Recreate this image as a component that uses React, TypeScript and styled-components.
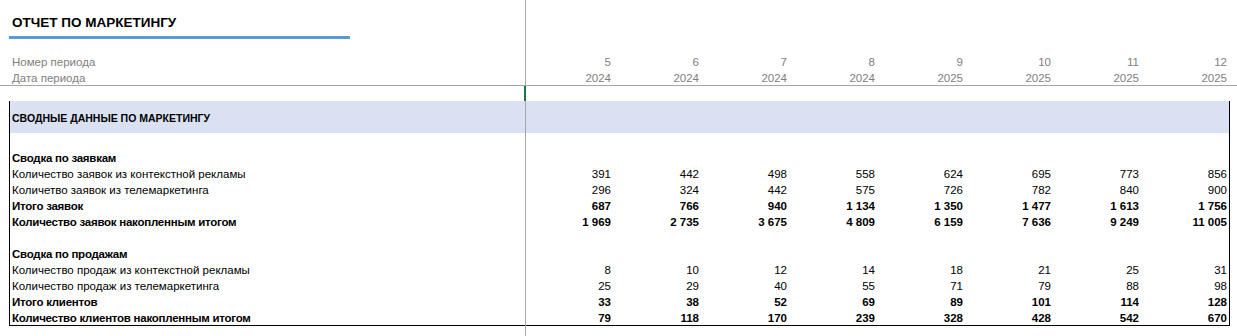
import React from "react";
import styled, { createGlobalStyle } from "styled-components";

const GlobalStyle = createGlobalStyle`
  html, body {
    margin: 0;
    padding: 0;
    background: #ffffff;
  }
  body {
    font-family: "Liberation Sans", Arial, sans-serif;
    font-size: 11.5px;
    color: #000000;
  }
`;

const Sheet = styled.div`
  position: relative;
  width: 1237px;
  height: 336px;
  overflow: hidden;
`;

const TitleBlock = styled.div`
  height: 53px;
  padding-left: 9px;
  box-sizing: border-box;
  padding-top: 14px;
`;

const Title = styled.h1`
  margin: 0 0 0 3px;
  font-size: 13.5px;
  font-weight: bold;
  line-height: 17px;
`;

const TitleRule = styled.div`
  margin-top: 5px;
  width: 341px;
  height: 3px;
  background: #5b9bd5;
`;

const PeriodHeader = styled.div`
  height: 32px;
  border-bottom: 1px solid #a6a6a6;
`;

const Grid = styled.div`
  display: grid;
  grid-template-columns: 515px repeat(8, 88px);
`;

const PeriodRow = styled(Grid)`
  padding-left: 10px;
  height: 16px;
  line-height: 18px;
  color: #808080;
`;

const Label = styled.div<{ $bold?: boolean }>`
  padding-left: 2px;
  white-space: nowrap;
  font-weight: ${(p) => (p.$bold ? "bold" : "normal")};
  letter-spacing: ${(p) => (p.$bold ? "-0.25px" : "0")};
`;

const Num = styled.div<{ $bold?: boolean }>`
  text-align: right;
  padding-right: 2px;
  white-space: nowrap;
  font-weight: ${(p) => (p.$bold ? "bold" : "normal")};
`;

const Spacer = styled.div`
  height: 15px;
`;

const Box = styled.div`
  margin-left: 9px;
  width: 1219px;
  border: 1px solid #000000;
`;

const Band = styled.div`
  height: 32px;
  line-height: 34px;
  background: #d9e1f2;
  padding-left: 2px;
  font-size: 10.5px;
  font-weight: bold;
  margin-top: -1px;
`;

const DataRow = styled(Grid)`
  height: 16px;
  line-height: 18px;
`;

const PaneLine = styled.div`
  position: absolute;
  top: 0;
  bottom: 0;
  left: 525px;
  width: 1px;
  background: #a6a6a6;
`;

const ActiveCell = styled.div`
  position: absolute;
  top: 86px;
  left: 524px;
  width: 2px;
  height: 15px;
  background: #217346;
`;

type Row = { label: string; bold?: boolean; values?: string[] };

const periods = ["5", "6", "7", "8", "9", "10", "11", "12"];
const years = ["2024", "2024", "2024", "2024", "2025", "2025", "2025", "2025"];

const rows: Row[] = [
  { label: "" },
  { label: "Сводка по заявкам", bold: true },
  { label: "Количество заявок из контекстной рекламы", values: ["391", "442", "498", "558", "624", "695", "773", "856"] },
  { label: "Количетво заявок из телемаркетинга", values: ["296", "324", "442", "575", "726", "782", "840", "900"] },
  { label: "Итого заявок", bold: true, values: ["687", "766", "940", "1 134", "1 350", "1 477", "1 613", "1 756"] },
  { label: "Количество заявок накопленным итогом", bold: true, values: ["1 969", "2 735", "3 675", "4 809", "6 159", "7 636", "9 249", "11 005"] },
  { label: "" },
  { label: "Сводка по продажам", bold: true },
  { label: "Количество продаж из контекстной рекламы", values: ["8", "10", "12", "14", "18", "21", "25", "31"] },
  { label: "Количество продаж из телемаркетинга", values: ["25", "29", "40", "55", "71", "79", "88", "98"] },
  { label: "Итого клиентов", bold: true, values: ["33", "38", "52", "69", "89", "101", "114", "128"] },
  { label: "Количество клиентов накопленным итогом", bold: true, values: ["79", "118", "170", "239", "328", "428", "542", "670"] },
];

export default function App() {
  return (
    <Sheet>
      <GlobalStyle />
      <TitleBlock>
        <Title>ОТЧЕТ ПО МАРКЕТИНГУ</Title>
        <TitleRule />
      </TitleBlock>
      <PeriodHeader>
        <PeriodRow>
          <Label>Номер периода</Label>
          {periods.map((p, i) => (
            <Num key={i}>{p}</Num>
          ))}
        </PeriodRow>
        <PeriodRow>
          <Label>Дата периода</Label>
          {years.map((y, i) => (
            <Num key={i}>{y}</Num>
          ))}
        </PeriodRow>
      </PeriodHeader>
      <Spacer />
      <Box>
        <Band>СВОДНЫЕ ДАННЫЕ ПО МАРКЕТИНГУ</Band>
        {rows.map((r, i) => (
          <DataRow key={i}>
            <Label $bold={r.bold}>{r.label}</Label>
            {(r.values ?? []).map((v, j) => (
              <Num key={j} $bold={r.bold}>
                {v}
              </Num>
            ))}
          </DataRow>
        ))}
      </Box>
      <PaneLine />
      <ActiveCell />
    </Sheet>
  );
}
